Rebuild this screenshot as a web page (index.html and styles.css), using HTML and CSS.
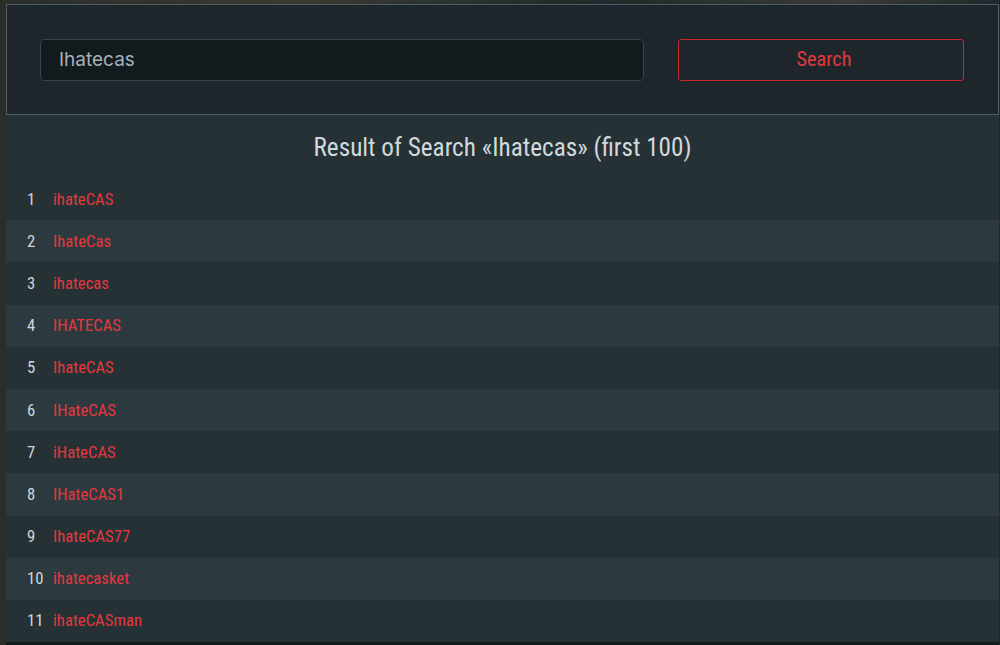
FILE: index.html
```html
<!DOCTYPE html>
<html>
<head>
<meta charset="utf-8">
<link rel="stylesheet" href="styles.css">
</head>
<body>
<div class="page">
  <div class="panel">
    <form class="search-bar">
      <div class="input">Ihatecas</div>
      <button type="button" class="btn">Search</button>
    </form>
    <div class="results">
      <h1 class="title">Result of Search «Ihatecas» (first 100)</h1>
      <ol class="list">
        <li class="row"><span class="num">1</span><span class="name">ihateCAS</span></li>
        <li class="row"><span class="num">2</span><span class="name">IhateCas</span></li>
        <li class="row"><span class="num">3</span><span class="name">ihatecas</span></li>
        <li class="row"><span class="num">4</span><span class="name">IHATECAS</span></li>
        <li class="row"><span class="num">5</span><span class="name">IhateCAS</span></li>
        <li class="row"><span class="num">6</span><span class="name">IHateCAS</span></li>
        <li class="row"><span class="num">7</span><span class="name">iHateCAS</span></li>
        <li class="row"><span class="num">8</span><span class="name">IHateCAS1</span></li>
        <li class="row"><span class="num">9</span><span class="name">IhateCAS77</span></li>
        <li class="row"><span class="num">10</span><span class="name">ihatecasket</span></li>
        <li class="row"><span class="num">11</span><span class="name">ihateCASman</span></li>
      </ol>
    </div>
  </div>
</div>
</body>
</html>
```
FILE: styles.css
```css
html, body {
  margin: 0;
  padding: 0;
  height: 100%;
  overflow: hidden;
}
body {
  background: linear-gradient(90deg, #2a2e28 0%, #3a3a30 30%, #1f2a2a 60%, #3b3a34 85%, #20282a 100%);
  font-family: Roboto, "Liberation Sans", sans-serif;
}
.page {
  padding: 4px 1px 0 6px;
}
.panel {
  background: #263136;
  border-bottom: 3px solid #141b1e;
}
.search-bar {
  margin: 0;
  height: 111px;
  box-sizing: border-box;
  border: 1px solid #4a5f69;
  background: #1e262b;
  display: flex;
  align-items: center;
  padding: 0 34px 0 33px;
  gap: 34px;
}
.input {
  flex: 0 0 604px;
  box-sizing: border-box;
  height: 42px;
  background: #121a1d;
  border: 1px solid #33434a;
  border-radius: 4px;
  display: flex;
  align-items: center;
  padding-left: 18px;
  font-family: Inter, Roboto, sans-serif;
  font-size: 19px;
  color: #a3b3bb;
}
.btn {
  flex: 1;
  height: 42px;
  box-sizing: border-box;
  background: transparent;
  border: 1px solid #c52a30;
  border-radius: 3px;
  color: #e0383d;
  font-family: Roboto, sans-serif;
  font-size: 20.3px;
  font-stretch: condensed;
  padding: 0 0 1px 6px;
  cursor: pointer;
}
.results {
  padding-top: 1px;
}
.title {
  margin: 0;
  height: 62px;
  display: flex;
  align-items: center;
  justify-content: center;
  font-weight: 400;
  font-size: 25.2px;
  color: #d0d9dd;
  font-stretch: condensed;
}
.list {
  list-style: none;
  margin: 0;
  padding: 0;
}
.row {
  height: 42.2px;
  display: flex;
  align-items: center;
  padding-left: 21px;
  font-size: 16.7px;
  font-stretch: condensed;
}
.row:nth-child(even) {
  background: #2c393f;
}
.num {
  width: 26px;
  color: #cfd7db;
}
.name {
  color: #e4383d;
}
```
